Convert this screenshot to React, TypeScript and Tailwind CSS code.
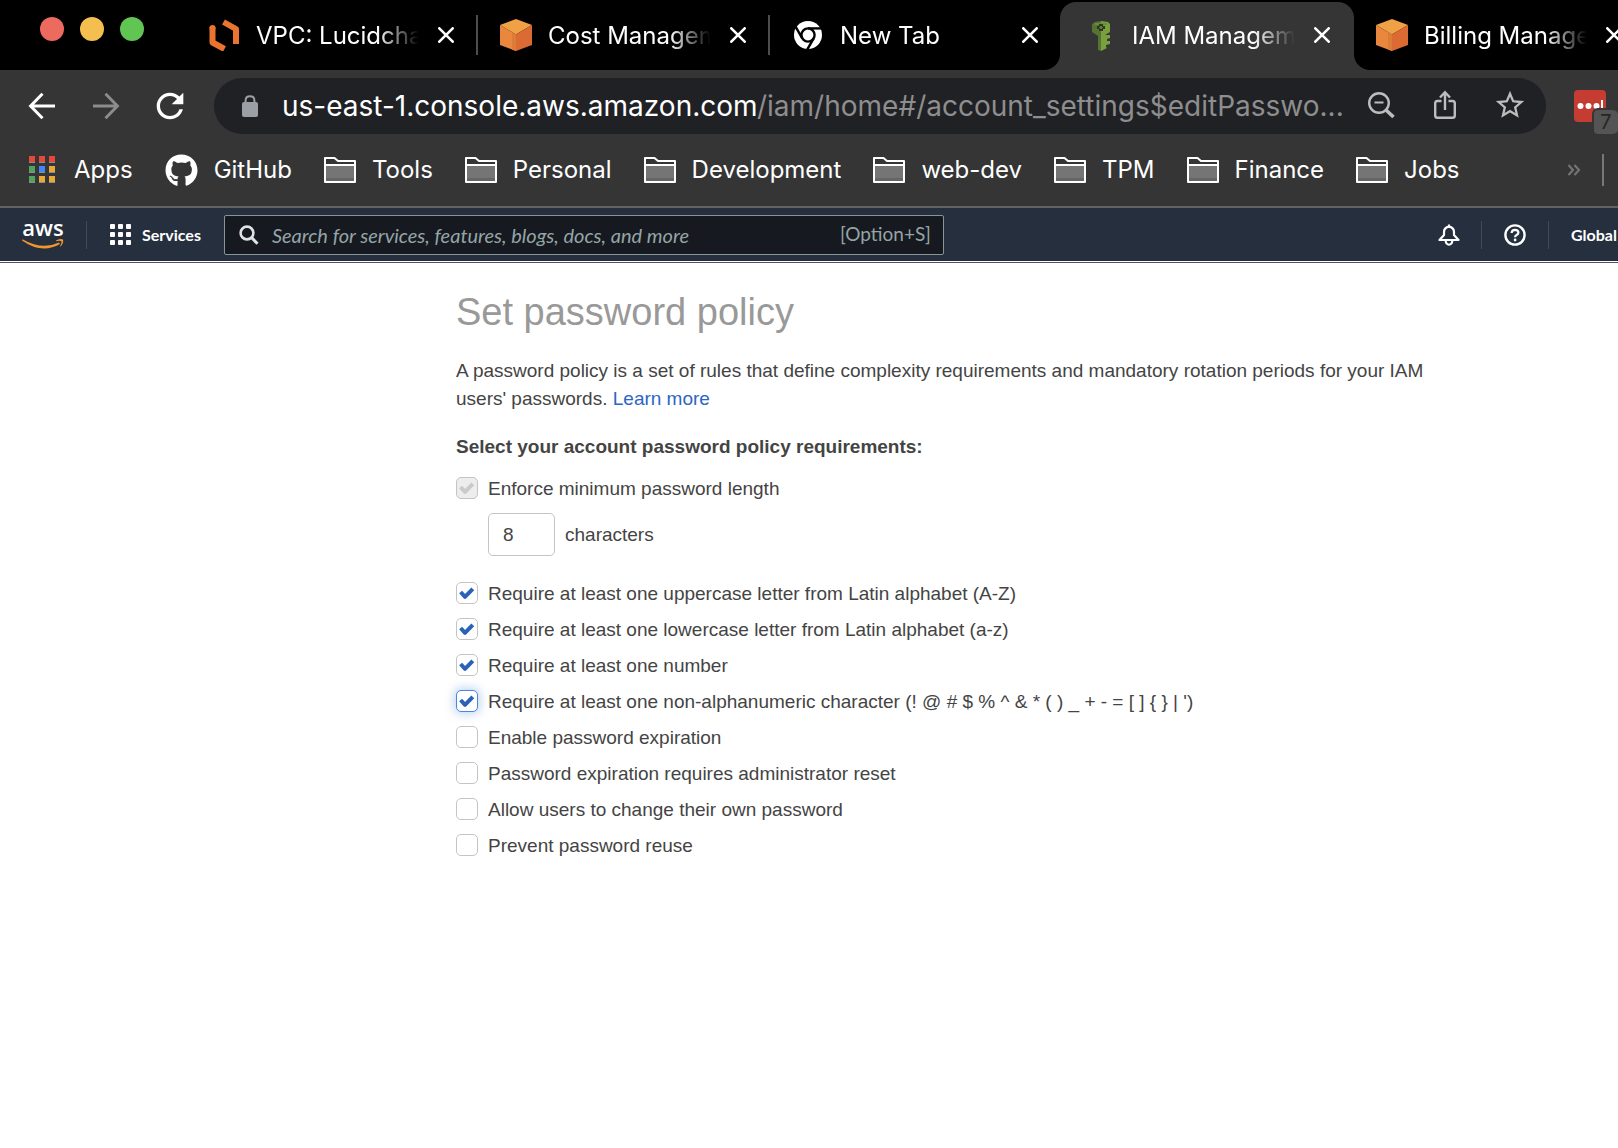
import React, { useState } from 'react';
import { FaGithub } from 'react-icons/fa';
import { MdRefresh, MdStarOutline } from 'react-icons/md';

function LucidIcon() {
  return (
    <svg viewBox="0 0 32 32" className="size-8" fill="none" stroke="#ea7430" strokeWidth="6" strokeLinejoin="round">
      <path d="M4.5 8V23.5L16.5 30" />
      <path d="M15.5 3L28 10V25" />
      <circle cx="4.5" cy="9" r="2" strokeWidth="2" fill="#ea7430" />
    </svg>
  );
}

function CubeIcon() {
  return (
    <svg viewBox="0 0 32 32" className="size-8">
      <path d="M16 0L32 6L16 15.5L0 6Z" fill="#f0a045" />
      <path d="M0 6L16 15.5V32L0 26Z" fill="#e8873d" />
      <path d="M32 6L16 15.5V32L32 26Z" fill="#dc6a33" />
      <path d="M12 13.2L16 15.5V32L12 30.5Z" fill="#dd7c39" />
    </svg>
  );
}

function ChromeIcon() {
  return (
    <svg viewBox="0 0 32 32" className="size-8">
      <circle cx="16" cy="16" r="14" fill="#fff" />
      <g fill="none" stroke="#000" strokeWidth="2.4">
        <circle cx="16" cy="16" r="6.6" />
        <path d="M16 9.4H30" />
        <path d="M16 9.4H30" transform="rotate(120 16 16)" />
        <path d="M16 9.4H30" transform="rotate(240 16 16)" />
      </g>
    </svg>
  );
}

function KeyIcon() {
  return (
    <svg viewBox="0 0 32 32" className="size-8">
      <path d="M11 3L17 2V32L14 31V17L8 13V5Z" fill="#557331" />
      <path d="M17 2L24 3L26 5V13L21 16H26V19L23 20V22H26V25L22 26V28L23 29L17 32Z" fill="#7a9f3e" />
      <path d="M11 4H23V6H11Z" fill="#6b8c39" />
      <path d="M15 5H19V7H21V10H19V12H15V10H13V7H15Z" fill="#2c3620" />
      <path d="M16 7H18V8H19V9H18V10H16V9H15V8H16Z" fill="#5f7a3a" />
    </svg>
  );
}

function CloseIcon() {
  return (
    <svg viewBox="0 0 16 16" className="size-4" stroke="#fff" strokeWidth="2.6" strokeLinecap="round">
      <path d="M1.3 1.3L14.7 14.7M14.7 1.3L1.3 14.7" />
    </svg>
  );
}

function ArrowIcon({ flipped }: { flipped?: boolean }) {
  return (
    <svg
      viewBox="0 0 40 40"
      className={flipped ? 'size-10 -scale-x-100' : 'size-10'}
      fill="none"
      stroke="currentColor"
      strokeWidth="3"
    >
      <path d="M33 20H9M20.5 7.8L8.6 20L20.5 32.2" />
    </svg>
  );
}

function FolderIcon() {
  return (
    <svg viewBox="0 0 32 26" className="h-[26px] w-8">
      <path d="M2 8H30V24H2Z" fill="#757575" />
      <path d="M2 21H30V24H2Z" fill="#666" />
      <path d="M1 25V1H10.5L14 4H31V25ZM1 8H31" fill="none" stroke="#fff" strokeWidth="2" strokeLinejoin="round" />
    </svg>
  );
}

function AppsIcon() {
  const cells = ['#e5493e', '#e5493e', '#e5493e', '#54a35d', '#4285f4', '#e8a93b', '#54a35d', '#e8a93b', '#e8a93b'];
  return (
    <svg viewBox="0 0 32 32" className="size-8">
      {cells.map((c, i) => (
        <g key={i}>
          <rect x={3 + (i % 3) * 10} y={2 + Math.floor(i / 3) * 10} width="6" height="7" fill="#8d8d8d" />
          <rect x={3 + (i % 3) * 10} y={2 + Math.floor(i / 3) * 10} width="6" height="6" fill={c} />
        </g>
      ))}
    </svg>
  );
}

type TabProps = { icon: React.ReactNode; title: string; lead?: 'divider' | 'blank' };

function Tab({ icon, title, lead }: TabProps) {
  return (
    <div className="flex h-full w-[292px] shrink-0 items-center">
      {lead && <span className={lead === 'divider' ? 'h-10 w-0.5 bg-[#4d4d4d]' : 'h-10 w-0.5'} />}
      <span className="ml-[22px] shrink-0">{icon}</span>
      <span className="ml-4 w-[166px] overflow-hidden pt-0.5 text-2xl whitespace-nowrap text-white [mask-image:linear-gradient(to_right,black_73%,transparent_98%)]">
        {title}
      </span>
      <button type="button" aria-label={`Close ${title}`} className="ml-4 shrink-0">
        <CloseIcon />
      </button>
    </div>
  );
}

function TabStrip() {
  return (
    <div className="flex h-[70px] overflow-hidden">
      <div className="flex shrink-0 rounded-br-2xl bg-black">
        <div className="flex w-[184px] gap-4 pt-[17px] pl-10">
          <button type="button" aria-label="Close window" className="size-6 rounded-full bg-[#ed6a5e]" />
          <button type="button" aria-label="Minimize window" className="size-6 rounded-full bg-[#f5bf4f]" />
          <button type="button" aria-label="Zoom window" className="size-6 rounded-full bg-[#61c554]" />
        </div>
        <Tab icon={<LucidIcon />} title="VPC: Lucidchart" lead="blank" />
        <Tab icon={<CubeIcon />} title="Cost Management" lead="divider" />
        <Tab icon={<ChromeIcon />} title="New Tab" lead="divider" />
      </div>
      <div className="shrink-0 bg-black pt-0.5">
        <div className="h-full rounded-t-2xl bg-[#353535] pr-0.5 pb-0.5">
          <Tab icon={<KeyIcon />} title="IAM Management" lead="blank" />
        </div>
      </div>
      <div className="flex-1 overflow-hidden rounded-bl-2xl bg-black">
        <Tab icon={<CubeIcon />} title="Billing Management" />
      </div>
    </div>
  );
}

function Toolbar() {
  const [host, setHost] = useState('us-east-1.console.aws.amazon.com');
  return (
    <div className="flex h-[72px] items-center pl-[22px]">
      <div className="flex shrink-0 gap-6">
        <button type="button" aria-label="Back" className="text-white">
          <ArrowIcon />
        </button>
        <button type="button" aria-label="Forward" className="text-[#8c8c8c]">
          <ArrowIcon flipped />
        </button>
        <button type="button" aria-label="Reload" className="text-white">
          <MdRefresh size={40} />
        </button>
      </div>
      <div className="ml-6 flex h-14 min-w-0 flex-1 items-center rounded-full bg-[#202124] pr-[19px] pl-7">
        <svg viewBox="0 0 16 22" className="h-[22px] w-4 shrink-0" fill="none">
          <path d="M3.6 9V5.4Q3.6 1.2 8 1.2Q12.4 1.2 12.4 5.4V9" stroke="#9aa0a6" strokeWidth="2" />
          <rect y="7" width="16" height="15" rx="2" fill="#9aa0a6" />
        </svg>
        <input
          aria-label="Address"
          value={host}
          onChange={(e) => setHost(e.target.value)}
          className="ml-6 w-[475px] shrink-0 bg-transparent text-[28px] leading-10 text-white outline-none"
        />
        <span className="flex-1 truncate text-[28px] leading-10 text-[#8e8e8e]">/iam/home#/account_settings$editPasswo...</span>
        <div className="ml-4 flex shrink-0 items-center gap-8 pb-0.5 text-[#bdbdbd]">
          <button type="button" aria-label="Zoom out">
            <svg viewBox="0 0 32 32" className="size-8" fill="none" stroke="currentColor">
              <circle cx="14" cy="14" r="9.8" strokeWidth="2.4" />
              <path d="M9.5 13.5H18.5" strokeWidth="2" />
              <path d="M21 21L28.5 28" strokeWidth="3.6" />
            </svg>
          </button>
          <button type="button" aria-label="Share">
            <svg viewBox="0 0 32 32" className="size-8" fill="none" stroke="currentColor" strokeWidth="2.4">
              <path d="M12.5 12H8.5Q6.2 12 6.2 14.3V26.5Q6.2 28.8 8.5 28.8H23.5Q25.8 28.8 25.8 26.5V14.3Q25.8 12 23.5 12H19.5" />
              <path d="M16 21V3.5M11 8.5L16 3.2L21 8.5" />
            </svg>
          </button>
          <button type="button" aria-label="Bookmark this page">
            <MdStarOutline size={34} />
          </button>
        </div>
      </div>
      <div className="relative ml-7 h-8 w-11 shrink-0">
        <button type="button" aria-label="Password manager" className="size-8 rounded bg-[#c43c32]">
          <svg viewBox="0 0 32 32" className="size-8" fill="#fff">
            <circle cx="6.5" cy="16" r="3" />
            <circle cx="14.5" cy="16" r="3" />
            <circle cx="22.5" cy="16" r="3" />
            <rect x="27" y="10" width="2" height="12" />
          </svg>
        </button>
        <span className="absolute top-[18px] right-0 box-content flex size-6 items-center justify-center rounded-md border-2 border-r-0 border-[#353535] bg-[#545454] text-xl text-[#262626]">
          7
        </span>
      </div>
    </div>
  );
}

const folders = ['Tools', 'Personal', 'Development', 'web-dev', 'TPM', 'Finance', 'Jobs'];

function BookmarksBar() {
  return (
    <nav aria-label="Bookmarks" className="flex h-16 items-center border-b-2 border-[#636363] pb-2.5 pl-[26px] text-2xl text-white">
      <div className="flex shrink-0 items-center gap-8">
        <a href="#apps" className="flex items-center gap-4">
          <AppsIcon />
          Apps
        </a>
        <a href="#github" className="flex items-center gap-4">
          <FaGithub className="size-[33px]" />
          GitHub
        </a>
        {folders.map((name) => (
          <button key={name} type="button" className="flex items-center gap-4">
            <FolderIcon />
            {name}
          </button>
        ))}
      </div>
      <button type="button" aria-label="More bookmarks" className="ml-auto">
        <svg viewBox="0 0 14 12" className="h-3 w-3.5" fill="none" stroke="#737373" strokeWidth="2.2">
          <path d="M1.5 1L6 6L1.5 11M7.5 1L12 6L7.5 11" />
        </svg>
      </button>
      <span className="mr-3.5 ml-[21px] h-8 w-0.5 bg-[#777]" />
    </nav>
  );
}

function AwsNav() {
  return (
    <header className="flex h-[53px] items-center bg-[#252f3e] font-['Lato',sans-serif] text-white">
      <a href="#home" aria-label="AWS home" className="ml-[22px] flex w-[42px] flex-col items-center">
        <span className="h-[18px] font-['Open_Sans',sans-serif] text-[22px] leading-[14px] font-semibold">aws</span>
        <svg viewBox="0 0 42 11" className="h-[11px] w-[42px]">
          <path d="M0.5 1.2Q20 12.5 37 4.5L38 6Q20 16.5 0 2.4Z" fill="#f0962f" />
          <path d="M34 2.4Q39 0.2 41 1.6Q42 5 38.6 8.6L38 8.2Q40 4.5 39.4 3.2Q37.5 2.4 34.2 3.2Z" fill="#f0962f" />
        </svg>
      </a>
      <span className="ml-[22px] h-7 w-px bg-[#414b57]" />
      <button type="button" className="ml-[23px] flex items-center gap-[11px] text-base font-bold">
        <svg viewBox="0 0 21 21" className="size-[21px]" fill="#fff">
          {[0, 8, 16].map((y) => [0, 8, 16].map((x) => <rect key={`${x}-${y}`} x={x} y={y} width="5" height="5" rx="1" />))}
        </svg>
        Services
      </button>
      <label className="ml-[23px] flex h-10 w-[720px] items-center rounded-[2px] border border-[#879596] bg-[#16191f] px-3">
        <svg viewBox="0 0 20 20" className="ml-0.5 size-5 shrink-0" fill="none" stroke="#e0e3e3" strokeWidth="2.6">
          <circle cx="8" cy="8" r="6.4" />
          <path d="M12.5 12.5L18.5 18.8" strokeWidth="3" />
        </svg>
        <input
          type="text"
          aria-label="Search"
          placeholder="Search for services, features, blogs, docs, and more"
          className="ml-[13px] min-w-0 flex-1 bg-transparent text-xl outline-none placeholder:text-[#95a5a6] placeholder:italic"
        />
        <span className="text-[19px] text-[#95a5a6]">[Option+S]</span>
      </label>
      <button type="button" aria-label="Notifications" className="ml-auto">
        <svg viewBox="0 0 22 22" className="size-[22px]" fill="none" stroke="#fff" strokeWidth="2.2" strokeLinejoin="round">
          <path d="M1.5 16H20.5L16 11V8Q16 3.5 11 2.6Q6 3.5 6 8V11Z" />
          <path d="M11 0.5V3" />
          <path d="M7.6 16.5Q8 20.6 11 20.6Q14 20.6 14.4 16.5" />
        </svg>
      </button>
      <span className="ml-[21px] h-7 w-px bg-[#414b57]" />
      <button type="button" aria-label="Help" className="ml-[22px]">
        <svg viewBox="0 0 22 22" className="size-[22px]" fill="none" stroke="#fff" strokeWidth="2.4">
          <circle cx="11" cy="11" r="9.6" />
          <path d="M7.6 9Q7.8 5.8 11 5.8Q14.4 5.9 14.4 8.6Q14.3 10.2 12.6 11Q11.1 11.7 11.1 13.3" strokeWidth="2.2" />
          <circle cx="11.1" cy="16" r="1.4" fill="#fff" stroke="none" />
        </svg>
      </button>
      <span className="ml-[22px] h-7 w-px bg-[#414b57]" />
      <button type="button" className="w-[69px] overflow-hidden pl-[22px] text-left text-base font-bold">
        Global
      </button>
    </header>
  );
}

type CheckProps = { label: string; checked?: boolean; disabled?: boolean; focused?: boolean };

function CheckRow({ label, checked, disabled, focused }: CheckProps) {
  const [on, setOn] = useState(!!checked);
  const box = focused
    ? 'border-[#4a86dc] bg-white shadow-[0_0_10px_2px_rgba(74,134,220,0.35)]'
    : disabled
      ? 'border-[#c4c4c4] bg-[#ededed]'
      : 'border-[#c4c4c4] bg-white';
  return (
    <label className="flex h-9 items-center gap-2.5">
      <span className="relative mb-0.5 size-[22px] shrink-0">
        <input
          type="checkbox"
          checked={on}
          disabled={disabled}
          onChange={(e) => setOn(e.target.checked)}
          className={`block size-[22px] appearance-none rounded-[5px] border ${box}`}
        />
        {on && (
          <svg
            viewBox="0 0 22 22"
            className={`pointer-events-none absolute inset-0 size-[22px] ${disabled ? 'text-[#cacaca]' : 'text-[#2a62b8]'}`}
            fill="none"
            stroke="currentColor"
            strokeWidth="4"
            strokeLinejoin="round"
          >
            <path d="M4.6 10L9 14.8L16.8 6.8" />
          </svg>
        )}
      </span>
      {label}
    </label>
  );
}

const requirements: CheckProps[] = [
  { label: 'Require at least one uppercase letter from Latin alphabet (A-Z)', checked: true },
  { label: 'Require at least one lowercase letter from Latin alphabet (a-z)', checked: true },
  { label: 'Require at least one number', checked: true },
  { label: "Require at least one non-alphanumeric character (! @ # $ % ^ & * ( ) _ + - = [ ] { } | ')", checked: true, focused: true },
  { label: 'Enable password expiration' },
  { label: 'Password expiration requires administrator reset' },
  { label: 'Allow users to change their own password' },
  { label: 'Prevent password reuse' },
];

function PolicyForm() {
  const [length, setLength] = useState('8');
  return (
    <main className="max-w-[1450px] pt-[25px] pl-[456px] font-['Liberation_Sans',Arial,sans-serif] text-[19px] leading-7 text-[#444]">
      <h1 className="text-[38px] leading-[48px] text-[#999]">Set password policy</h1>
      <p className="mt-[21px]">
        A password policy is a set of rules that define complexity requirements and mandatory rotation periods for your IAM
        users' passwords.{' '}
        <a href="#learn-more" className="text-[#2b66c4]">
          Learn more
        </a>
      </p>
      <h2 className="mt-5 font-bold">Select your account password policy requirements:</h2>
      <div className="mt-2.5">
        <CheckRow label="Enforce minimum password length" checked disabled />
      </div>
      <label className="mt-1.5 flex items-center gap-2.5 pl-8">
        <input
          type="text"
          value={length}
          onChange={(e) => setLength(e.target.value)}
          className="h-[43px] w-[67px] rounded-[5px] border border-[#c4c4c4] bg-white px-3.5 outline-none"
        />
        characters
      </label>
      <div className="mt-5">
        {requirements.map((r) => (
          <CheckRow key={r.label} {...r} />
        ))}
      </div>
    </main>
  );
}

export default function App() {
  return (
    <div className="min-h-screen overflow-hidden bg-white">
      <div className="bg-[#353535] font-['Inter',sans-serif]">
        <TabStrip />
        <Toolbar />
        <div className="pt-0.5">
          <BookmarksBar />
        </div>
      </div>
      <AwsNav />
      <div className="mt-px h-px bg-[#4d5663]" />
      <PolicyForm />
    </div>
  );
}
